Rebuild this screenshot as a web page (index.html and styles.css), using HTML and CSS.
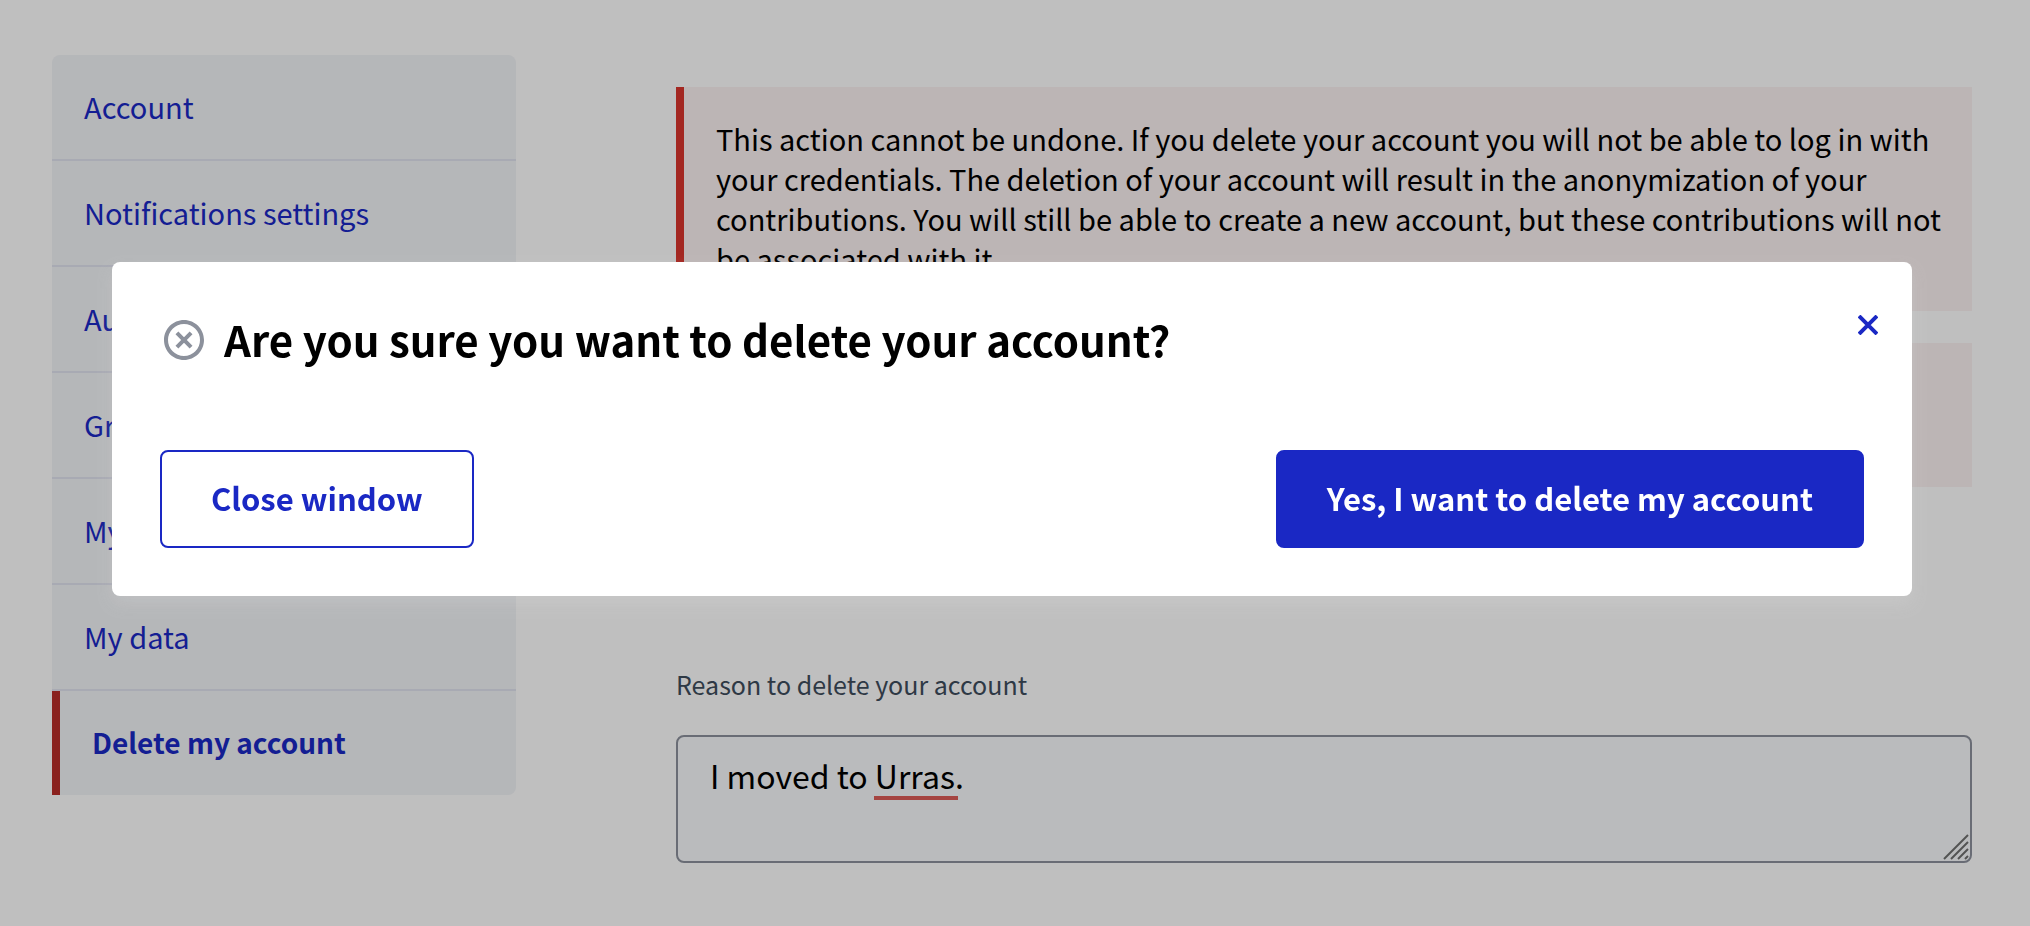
FILE: index.html
```
<!DOCTYPE html>
<html lang="en">
<head>
  <meta charset="UTF-8" />
  <meta name="viewport" content="width=device-width, initial-scale=1" />
  <title>Delete my account</title>
  <link rel="stylesheet" href="styles.css">
</head>
<body>
  <div class="page">
    <nav class="sidebar" aria-label="User settings">
      <ul>
        <li><a href="#account">Account</a></li>
        <li><a href="#notifications">Notifications settings</a></li>
        <li><a href="#authorizations">Authorizations</a></li>
        <li><a href="#groups">Groups</a></li>
        <li><a href="#interests">My interests</a></li>
        <li><a href="#data">My data</a></li>
        <li class="active"><a href="#delete" aria-current="page">Delete my account</a></li>
      </ul>
    </nav>

    <main class="content">
      <div class="callout">
        <p>This action cannot be undone. If you delete your account you will not be able to log in with your credentials. The deletion of your account will result in the anonymization of your contributions. You will still be able to create a new account, but these contributions will not be associated with it.</p>
      </div>
      <div class="callout callout-short"></div>

      <form class="delete-form">
        <label for="reason">Reason to delete your account</label>
        <div class="textarea-wrap">
          <textarea id="reason" rows="2" spellcheck="false">I moved to Urras.</textarea>
          <span class="spelling" aria-hidden="true"></span>
          <svg class="grip" viewBox="0 0 26 26" aria-hidden="true">
            <path d="M1 25L25 1M8 25L25 8M15 25L25 15M22 25L25 22" />
          </svg>
        </div>
      </form>
    </main>
  </div>

  <!-- Confirmation modal -->
  <div class="overlay">
    <div class="modal" role="dialog" aria-modal="true" aria-labelledby="modalTitle">
      <button type="button" class="modal-close" aria-label="Close">
        <svg viewBox="0 0 20 20" aria-hidden="true"><path d="M1 1L19 19M19 1L1 19" /></svg>
      </button>
      <div class="modal-header">
        <svg class="modal-icon" viewBox="0 0 24 24" aria-hidden="true">
          <path d="M12 22C6.477 22 2 17.523 2 12S6.477 2 12 2s10 4.477 10 10-4.477 10-10 10zm0-2a8 8 0 1 0 0-16 8 8 0 0 0 0 16zm0-9.414l2.828-2.829 1.415 1.415L13.414 12l2.829 2.828-1.415 1.415L12 13.414l-2.828 2.829-1.415-1.415L10.586 12 7.757 9.172l1.415-1.415L12 10.586z" />
        </svg>
        <h2 id="modalTitle">Are you sure you want to delete your account?</h2>
      </div>
      <div class="modal-actions">
        <button type="button" class="button button-outline">Close window</button>
        <button type="button" class="button">Yes, I want to delete my account</button>
      </div>
    </div>
  </div>
</body>
</html>
```
FILE: styles.css
```
* {
  box-sizing: border-box;
}
body {
  margin: 0;
  background: #fff;
  color: #000;
  font-family: "Noto Sans CJK SC", "Noto Sans", sans-serif;
  font-size: 29px;
  line-height: 40px;
}
.page {
  display: grid;
  grid-template-columns: 464px 1fr;
  gap: 160px;
  align-items: start;
  padding: 55px 58px 0 52px;
}

/* sidebar */
.sidebar ul {
  list-style: none;
  margin: 0;
  padding: 0;
  background: #f2f4f7;
  border-radius: 8px 8px 8px 0;
}
.sidebar li + li {
  border-top: 2px solid #e1e3ef;
}
.sidebar a {
  display: block;
  padding: 31px 32px 33px;
  color: #1a28c4;
  text-decoration: none;
}
.sidebar .active a {
  border-left: 8px solid #b92d28;
  font-size: 28px;
  font-weight: bold;
}

/* content */
.content {
  padding-top: 32px;
}
.callout {
  margin-bottom: 32px;
  padding: 31px 24px 33px 32px;
  background: #fbf2f2;
  border-left: 8px solid #da352d;
}
.callout p {
  margin: 0;
}
.callout-short {
  height: 144px;
}
.delete-form {
  padding-top: 145px;
}
.delete-form label {
  display: block;
  margin-bottom: 31px;
  color: #3e4c5c;
  font-size: 25px;
}
.textarea-wrap {
  position: relative;
}
textarea {
  display: block;
  width: 100%;
  height: 128px;
  padding: 14px 32px;
  background: #f9fafc;
  border: 2px solid #8c919c;
  border-radius: 8px;
  color: #000;
  font: inherit;
  font-size: 32px;
  line-height: 48px;
  resize: none;
  outline: none;
}
.spelling {
  position: absolute;
  left: 198px;
  top: 61px;
  width: 84px;
  height: 4px;
  background: #dc5b57;
}
.grip {
  position: absolute;
  right: 3px;
  bottom: 3px;
  width: 26px;
  height: 26px;
  fill: none;
  stroke: #6f6f6f;
  stroke-width: 2;
}

/* modal */
.overlay {
  position: fixed;
  inset: 0;
  padding: 262px 118px 0 112px;
  background: rgba(0, 0, 0, 0.25);
}
.modal {
  position: relative;
  padding: 48px;
  background: #fff;
  border-radius: 8px;
  box-shadow: 0 8px 16px rgba(225, 225, 225, 0.2);
}
.modal-header {
  display: flex;
  align-items: center;
  gap: 16px;
  margin-bottom: 80px;
}
.modal-icon {
  width: 48px;
  height: 48px;
  fill: #8c919c;
}
.modal h2 {
  margin: 0;
  padding-bottom: 2px;
  font-size: 42px;
  line-height: 58px;
}
.modal-close {
  position: absolute;
  top: 48px;
  right: 29px;
  display: flex;
  padding: 5px;
  background: none;
  border: none;
  cursor: pointer;
}
.modal-close svg {
  width: 20px;
  height: 20px;
  fill: none;
  stroke: #1a28c4;
  stroke-width: 4;
}
.modal-actions {
  display: flex;
  justify-content: space-between;
}
.button {
  padding: 23px 49px 25px;
  background: #1a28c4;
  border: 2px solid #1a28c4;
  border-radius: 8px;
  color: #fff;
  font: inherit;
  font-size: 31px;
  font-weight: bold;
  line-height: 46px;
  cursor: pointer;
}
.button-outline {
  background: #fff;
  color: #1a28c4;
}
```
